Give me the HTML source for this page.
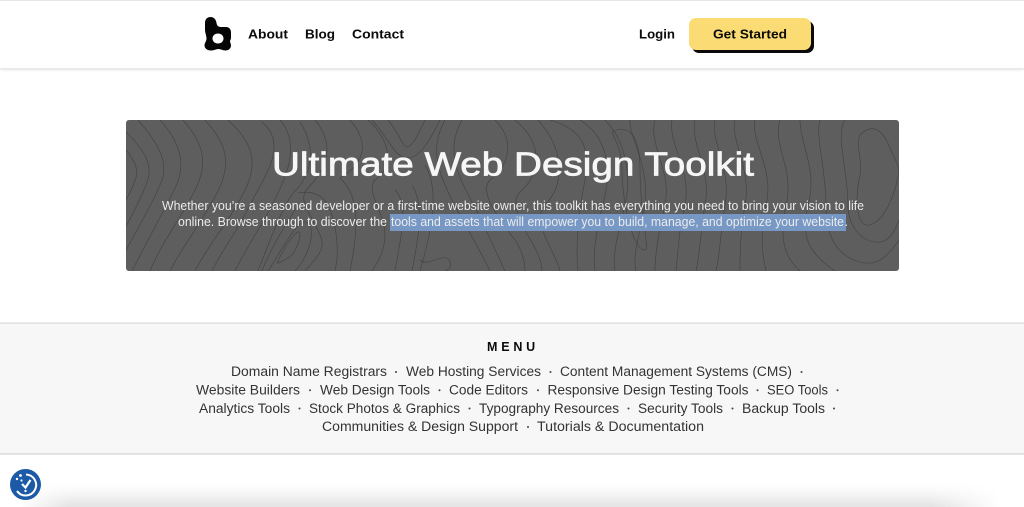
<!DOCTYPE html>
<html lang="en"><head><meta charset="utf-8"><title>Ultimate Web Design Toolkit</title>
<style>
html,body{margin:0;padding:0;width:1024px;height:507px;overflow:hidden;background:#fff}
#w{position:relative;width:1024px;height:507px;overflow:hidden;background:#fff}
svg{position:absolute;left:0;top:0;display:block}
text{font-family:"Liberation Sans",sans-serif}
.n{font-weight:700;font-size:13px;fill:#0b0b0b}
.m{font-size:13.5px;fill:#333}
.p{font-size:12.6px;fill:#ececec}
.t path{fill:none;stroke:#3c3c3c;stroke-width:.6;opacity:.85}
</style></head><body>
<div id="w">
<svg width="1024" height="507" viewBox="0 0 1024 507" xmlns="http://www.w3.org/2000/svg">
<defs><filter id="hs" x="-5%" y="-50%" width="110%" height="200%"><feGaussianBlur stdDeviation="1.2"/></filter>
<clipPath id="hc"><rect x="126" y="120" width="773" height="151" rx="3"/></clipPath>
<linearGradient id="bv" x1="0" y1="0" x2="0" y2="1"><stop offset="0" stop-color="#000" stop-opacity="0"/><stop offset=".35" stop-color="#000" stop-opacity=".025"/><stop offset="1" stop-color="#000" stop-opacity=".11"/></linearGradient>
<linearGradient id="bh" x1="0" y1="0" x2="1" y2="0"><stop offset="0" stop-color="#000"/><stop offset=".05" stop-color="#fff"/><stop offset=".93" stop-color="#fff"/><stop offset="1" stop-color="#000"/></linearGradient>
<mask id="bm" maskUnits="userSpaceOnUse" x="20" y="483" width="980" height="24"><rect x="20" y="483" width="980" height="24" fill="url(#bh)"/></mask></defs>
<rect x="20" y="483" width="980" height="24" fill="url(#bv)" mask="url(#bm)"/>
<!-- header -->
<rect x="0" y="0" width="1024" height="1" fill="#e6e6e6"/>
<rect x="0" y="67" width="1024" height="3" fill="#e2e2e2" filter="url(#hs)"/>
<rect x="0" y="1" width="1024" height="67" fill="#fff"/>
<!-- logo -->
<path fill="#050505" fill-rule="evenodd" d="M205 23C205 19 207.500 17 210.500 17C214 17 216 19.500 216.500 23C217 26 218.500 27 221 27L226 27C229 27 231 29 231 32.500L231 38C231 39.500 230 40 230 41.500C230 42.500 231 43.500 231 45.500C231 48.500 228.500 50.500 225.500 50.500C222.500 50.500 221 49 218.500 49C216 49 214.500 50.500 211 50.500C207 50.500 204.500 48 204.500 45.500C204.500 42.500 206.500 41.500 206.500 38.500C206.500 35.500 205 33 205 30ZM212.500 38.500C212.500 41.500 215 43.500 218 43.500C221 43.500 223.500 41.500 223.500 38.500C223.500 35.500 221 33.500 218 33.500C215 33.500 212.500 35.500 212.500 38.500Z"/>
<text x="248" y="38.500" class="n" textLength="40" lengthAdjust="spacingAndGlyphs">About</text>
<text x="305" y="38.500" class="n" textLength="30" lengthAdjust="spacingAndGlyphs">Blog</text>
<text x="352" y="38.500" class="n" textLength="52" lengthAdjust="spacingAndGlyphs">Contact</text>
<text x="639" y="38.500" class="n" textLength="36" lengthAdjust="spacingAndGlyphs">Login</text>
<rect x="692" y="21" width="122" height="32" rx="7" fill="#0a0a0a"/>
<rect x="689" y="18" width="122" height="32" rx="7" fill="#fbdc74"/>
<text x="713" y="38.500" class="n" textLength="74" lengthAdjust="spacingAndGlyphs">Get Started</text>
<!-- hero -->
<rect x="126" y="120" width="773" height="151" rx="3" fill="#5e5e5e"/>
<g class="t" clip-path="url(#hc)">
<path d="M126 150C134 160 140 170 135 180C132 190 128 196 126 200"/>
<path d="M126 132C144 150 155 165 146 185C138 205 132 215 126 226"/>
<path d="M138 120C160 145 170 165 160 185C150 208 138 228 126 250"/>
<path d="M160 120C180 142 187 165 175 188C162 215 145 245 132 271"/>
<path d="M183 120C205 145 208 165 195 190C180 220 160 245 150 271"/>
<path d="M205 120C228 145 232 165 216 195C200 225 180 250 170 271"/>
<path d="M228 120C250 140 260 160 245 190C230 220 208 245 195 271"/>
<path d="M262 122C290 145 262 180 250 205C238 230 222 250 212 271"/>
<path d="M280 120C302 145 285 180 272 205C262 225 245 250 235 271"/>
<path d="M300 122C318 150 310 175 296 190C285 200 270 240 258 271"/>
<path d="M315 120C340 150 320 175 308 188C296 200 312 215 320 235C328 250 312 262 305 271"/>
<path d="M262 271C270 250 285 225 298 205"/>
<path d="M277 263C283 250 292 235 298 232C304 230 296 255 288 258C284 260 279 264 277 263Z"/>
<path d="M268 271C285 245 296 222 305 222C318 225 310 255 295 271"/>
<path d="M298 193C312 190 325 195 330 210C336 225 340 250 335 271"/>
<path d="M350 120C372 145 362 165 340 178C358 195 360 220 350 271"/>
<path d="M368 120C390 140 395 165 375 180C365 190 385 215 385 235C385 250 378 262 372 271"/>
<path d="M388 120C400 135 403 147 407 147C412 147 418 135 425 120"/>
<path d="M372 120C390 140 395 158 407 158C420 158 430 140 440 120"/>
<path d="M395 190C410 205 400 240 395 271"/>
<path d="M412 185C425 205 418 240 412 271"/>
<path d="M425 165C440 190 432 230 420 271"/>
<path d="M420 260C428 268 445 250 450 262C452 268 448 270 445 271"/>
<path d="M445 120C428 150 440 175 452 200C465 225 480 250 490 271"/>
<path d="M462 120C445 150 458 175 470 198C482 220 495 250 505 271"/>
<path d="M495 120C515 140 510 165 490 180C478 192 500 220 515 240C522 250 525 262 525 271"/>
<path d="M515 120C545 145 540 175 520 192C508 205 525 230 535 248C540 258 542 265 542 271"/>
<path d="M538 120C565 150 565 185 545 205C530 222 555 250 560 271"/>
<path d="M550 120C585 130 590 150 585 180C580 205 575 240 578 271"/>
<path d="M580 120C605 135 612 165 605 195C598 225 592 250 595 271"/>
<path d="M605 120C625 140 632 175 625 205C618 235 612 255 615 271"/>
<path d="M630 120C628 135 650 165 645 205C640 235 632 255 636 271"/>
<path d="M612 132C625 125 640 130 640 170C640 215 650 250 645 250C632 250 622 200 622 170C622 150 615 140 612 132Z"/>
<path d="M655 120C648 145 672 170 665 205C658 235 655 255 655 271"/>
<path d="M672 120C668 145 692 170 685 205C678 235 678 255 676 271"/>
<path d="M695 120C690 145 712 170 705 205C700 235 700 255 696 271"/>
<path d="M715 120C710 140 732 170 725 205C720 235 720 255 716 271"/>
<path d="M735 120C730 140 752 170 745 205C740 235 740 255 740 271"/>
<path d="M755 120C750 140 775 170 766 205C760 235 762 255 766 271"/>
<path d="M780 120C772 145 795 170 786 205C780 235 782 255 800 271"/>
<path d="M800 120C800 145 818 170 808 205C802 235 805 250 835 271"/>
<path d="M820 120C815 135 826 170 826 205C826 235 835 255 860 262C880 268 892 250 899 240"/>
<path d="M845 120C835 135 848 170 848 205C848 225 860 240 875 242C888 244 895 232 899 220"/>
<path d="M860 135C875 120 885 135 890 148C895 160 899 165 899 172C895 195 885 220 870 225C855 228 855 195 860 175C863 160 855 145 860 135Z"/>
</g>
<text x="272" y="175.500" font-size="33.500" fill="#f6f6f6" stroke="#f6f6f6" stroke-width=".75" textLength="482" lengthAdjust="spacingAndGlyphs">Ultimate Web Design Toolkit</text>
<rect x="390" y="214" width="456" height="17" fill="#7797c5"/>
<text x="162" y="210" class="p" textLength="702" lengthAdjust="spacingAndGlyphs">Whether you’re a seasoned developer or a first-time website owner, this toolkit has everything you need to bring your vision to life</text>
<text x="178" y="226" class="p" textLength="209" lengthAdjust="spacingAndGlyphs">online. Browse through to discover the</text>
<text x="391" y="226" class="p" textLength="453" lengthAdjust="spacingAndGlyphs">tools and assets that will empower you to build, manage, and optimize your website</text>
<text x="844.500" y="226" class="p">.</text>
<!-- menu -->
<rect x="0" y="323" width="1024" height="131" fill="#f7f7f7"/>
<rect x="0" y="322.500" width="1024" height="1.200" fill="#d8d8d8"/>
<rect x="0" y="453.300" width="1024" height="1.300" fill="#d6d6d6"/>
<text x="487" y="351" font-size="12.500" font-weight="700" fill="#0b0b0b" letter-spacing="3.800">MENU</text>
<g>
<text class="m" x="231" y="376" textLength="156" lengthAdjust="spacingAndGlyphs">Domain Name Registrars</text>
<text class="m" x="406" y="376" textLength="135" lengthAdjust="spacingAndGlyphs">Web Hosting Services</text>
<text class="m" x="560" y="376" textLength="232" lengthAdjust="spacingAndGlyphs">Content Management Systems (CMS)</text>
<text class="m" x="196" y="394.500" textLength="104" lengthAdjust="spacingAndGlyphs">Website Builders</text>
<text class="m" x="320" y="394.500" textLength="110" lengthAdjust="spacingAndGlyphs">Web Design Tools</text>
<text class="m" x="449" y="394.500" textLength="79" lengthAdjust="spacingAndGlyphs">Code Editors</text>
<text class="m" x="547.500" y="394.500" textLength="201" lengthAdjust="spacingAndGlyphs">Responsive Design Testing Tools</text>
<text class="m" x="767" y="394.500" textLength="61" lengthAdjust="spacingAndGlyphs">SEO Tools</text>
<text class="m" x="199" y="412.800" textLength="91" lengthAdjust="spacingAndGlyphs">Analytics Tools</text>
<text class="m" x="309" y="412.800" textLength="151" lengthAdjust="spacingAndGlyphs">Stock Photos &amp; Graphics</text>
<text class="m" x="479" y="412.800" textLength="140" lengthAdjust="spacingAndGlyphs">Typography Resources</text>
<text class="m" x="638" y="412.800" textLength="85" lengthAdjust="spacingAndGlyphs">Security Tools</text>
<text class="m" x="742" y="412.800" textLength="83" lengthAdjust="spacingAndGlyphs">Backup Tools</text>
<text class="m" x="322" y="431" textLength="196" lengthAdjust="spacingAndGlyphs">Communities &amp; Design Support</text>
<text class="m" x="537" y="431" textLength="167" lengthAdjust="spacingAndGlyphs">Tutorials &amp; Documentation</text>
</g>
<g fill="#444">
<circle cx="396" cy="372" r="1"/><circle cx="550.500" cy="372" r="1"/><circle cx="801.500" cy="372" r="1"/>
<circle cx="310" cy="390.300" r="1"/><circle cx="439.500" cy="390.300" r="1"/><circle cx="538" cy="390.300" r="1"/><circle cx="757.500" cy="390.300" r="1"/><circle cx="837.500" cy="390.300" r="1"/>
<circle cx="299.500" cy="408.500" r="1"/><circle cx="469.500" cy="408.500" r="1"/><circle cx="628.500" cy="408.500" r="1"/><circle cx="732.500" cy="408.500" r="1"/><circle cx="834" cy="408.500" r="1"/>
<circle cx="528" cy="427" r="1"/>
</g>
<!-- accessibility widget -->
<circle cx="25.500" cy="484.500" r="15.500" fill="#1d5aa6"/>
<path d="M26 474.500A10.500 10.500 0 1 1 17 491" fill="none" stroke="#fff" stroke-width="2"/>
<path d="M22 484L25.500 487.500L30.500 480" fill="none" stroke="#fff" stroke-width="2.200"/>
<circle cx="20.500" cy="475.500" r="1.400" fill="#fff"/><circle cx="17" cy="479" r="1.200" fill="#fff"/><circle cx="21.500" cy="480.500" r="1.100" fill="#fff"/><circle cx="25.500" cy="491" r="1.200" fill="#fff"/>
</svg>
</div>
</body></html>
